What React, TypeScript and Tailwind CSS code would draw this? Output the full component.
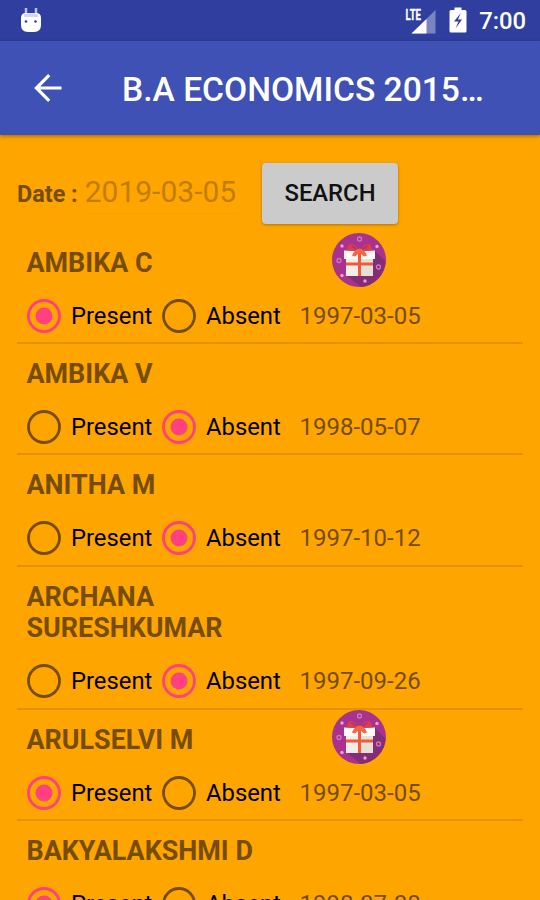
import React from "react";

type Status = "present" | "absent";

interface Student {
  name: string;
  status: Status;
  dob: string;
  birthday?: boolean;
}

const students: Student[] = [
  { name: "AMBIKA C", status: "present", dob: "1997-03-05", birthday: true },
  { name: "AMBIKA V", status: "absent", dob: "1998-05-07" },
  { name: "ANITHA M", status: "absent", dob: "1997-10-12" },
  { name: "ARCHANA SURESHKUMAR", status: "absent", dob: "1997-09-26" },
  { name: "ARULSELVI M", status: "present", dob: "1997-03-05", birthday: true },
  { name: "BAKYALAKSHMI D", status: "present", dob: "1998-07-08" },
];

function StatusBar() {
  return (
    <div className="flex h-[41px] shrink-0 items-center bg-[#303f9f] pl-[20px] pr-[14px] text-white">
      <svg width="22" height="26" viewBox="0 0 22 26" className="-mt-[2px]">
        <path d="M6 1v6M16 1v6" stroke="#b9bfe6" strokeWidth="2.500" />
        <path d="M1 11q0-5 5-5h10q5 0 5 5v7q0 7-7 7H8q-7 0-7-7z" fill="#fff" />
        <path d="M4 7.500q7-2.500 14 0v2.500H4z" fill="#d3d6ef" />
        <circle cx="6" cy="14.500" r="1.300" fill="#303f9f" />
        <circle cx="15.500" cy="14.500" r="1.300" fill="#303f9f" />
      </svg>
      <svg width="31" height="26" viewBox="0 0 31 26" className="ml-auto">
        <path d="M30.500 2v23.500H6.500z" fill="#7a84c3" />
        <path d="M21.500 11v14.500H6.500z" fill="#fff" />
        <path d="M0 0h17v13.500H0z" fill="#303f9f" />
        <text x="0.500" y="12" fill="#fff" stroke="#fff" strokeWidth="0.300" fontFamily="Roboto, sans-serif" fontSize="14.500" fontWeight="700" textLength="15.500" lengthAdjust="spacingAndGlyphs">LTE</text>
      </svg>
      <svg width="18" height="26" viewBox="0 0 18 26" className="ml-[13px] -mt-[2px]">
        <path d="M5.500 0.500h7v2.500h3.500q1.500 0 1.500 1.500v19.500q0 1.500-1.500 1.500H2q-1.500 0-1.500-1.500V4.500Q.5 3 2 3h3.500z" fill="#fff" />
        <path d="M11.800 6L5 14.500h4.500L6.500 21.500l6.500-9H9z" fill="#303f9f" />
      </svg>
      <span className="ml-[12px] mt-[3px] text-[23.800px] font-medium leading-none">7:00</span>
    </div>
  );
}

function AppBar() {
  return (
    <header className="z-10 flex h-[94px] shrink-0 items-center bg-[#3f51b5] pl-[34px] text-white shadow-[0_1px_4px_rgba(0,0,0,0.4)]">
      <svg width="28" height="28" viewBox="0 0 28 28" fill="none" stroke="#fff" strokeWidth="3.200">
        <path d="M27.500 14H3M15.200 1.200L2.400 14l12.800 12.800" />
      </svg>
      <h1 className="ml-[60px] mt-[3px] w-[370px] whitespace-nowrap text-[33.600px] font-medium leading-none">B.A ECONOMICS 2015…</h1>
    </header>
  );
}

function GiftIcon() {
  return (
    <svg width="54" height="54" viewBox="0 0 54 54" className="shrink-0">
      <circle cx="27" cy="27" r="27" fill="#a9328c" />
      <path d="M42 17l11.500 11.500A27 27 0 0 1 29 54L14 42z" fill="#842d77" />
      <g fill="#e3a5d8">
        <circle cx="10" cy="13" r="1.700" />
        <circle cx="45" cy="13.500" r="1.700" />
        <circle cx="10" cy="42.500" r="1.700" />
        <circle cx="33" cy="48" r="1.700" />
      </g>
      <g fill="none" stroke="#cf75bf" strokeWidth="1.300">
        <circle cx="27.500" cy="6" r="2" />
        <circle cx="7" cy="27.500" r="2" />
        <circle cx="46.500" cy="34" r="2" />
      </g>
      <path d="M14 26h27v17H14z" fill="#f2ede6" />
      <path d="M28 26h13v17H28z" fill="#e6dfd4" />
      <path d="M12 17.500h31V26H12z" fill="#fff8f3" />
      <path d="M14 29.500h27v3H14z" fill="#ee5b3c" />
      <path d="M26 18h3v25h-3z" fill="#ee5b3c" />
      <path d="M27.500 18.500Q23 9 17 11.500l-3 6zM27.500 18.500Q32 9 38 11.500l3 6z" fill="#dc3f48" />
      <path d="M19.500 12.500l5 3.500M35.500 12.500l-5 3.500" stroke="#a9328c" strokeWidth="2" />
      <path d="M27.500 15.500q-5 1-7.500 7l3 1 4.500-4 4.500 4 3-1q-2.500-6-7.500-7z" fill="#f26545" />
    </svg>
  );
}

function Radio({ checked, label }: { checked: boolean; label: string }) {
  return (
    <label className="flex w-[135px] items-center">
      <svg width="34" height="34" viewBox="0 0 34 34" className="shrink-0">
        <circle cx="17" cy="17" r="15.500" fill="none" stroke={checked ? "#ff4081" : "#754c00"} strokeWidth="2.800" />
        {checked && <circle cx="17" cy="17" r="8.500" fill="#ff4081" />}
      </svg>
      <span className="ml-[10.500px] mt-[2px] text-[23.800px] leading-none text-black">{label}</span>
    </label>
  );
}

function StudentRow({ student }: { student: Student }) {
  return (
    <li className="border-b-2 border-[#e39300] pb-[0.900px] pl-[9.500px]">
      <div className="flex min-h-[57.500px] items-start">
        <h2 className="w-[305px] pb-[10.900px] pr-[70px] pt-[15px] text-[26.900px] font-bold leading-[31.600px] text-[#754c00]">
          {student.name}
        </h2>
        {student.birthday && <GiftIcon />}
      </div>
      <div className="flex h-[51px] items-center">
        <Radio checked={student.status === "present"} label="Present" />
        <Radio checked={student.status === "absent"} label="Absent" />
        <span className="ml-[3px] text-[24px] leading-none text-[#754c00]">{student.dob}</span>
      </div>
    </li>
  );
}

export default function App() {
  return (
    <div className="flex h-[900px] w-[540px] flex-col overflow-hidden bg-[#ffa500] font-[Roboto,sans-serif]">
      <StatusBar />
      <AppBar />
      <main className="px-[17px]">
        <div className="flex h-[97.500px] items-start pt-[27.500px]">
          <span className="mt-[19px] whitespace-nowrap text-[23.400px] font-bold leading-[24px] text-[#754c00]">Date :</span>
          <span className="ml-[7px] mt-[11px] h-[40px] w-[153px] shrink-0 whitespace-nowrap border-b border-[#f99f00] text-[30px] leading-[36px] text-[#c27d00]">
            2019-03-05
          </span>
          <button className="ml-auto mr-[125px] h-[61px] w-[136px] shrink-0 rounded-[4px] bg-[#cbcbcb] pt-[2px] text-[23.800px] font-medium text-[#111] shadow-[0_1px_3px_rgba(0,0,0,0.3)]">
            SEARCH
          </button>
        </div>
        <ul>
          {students.map((student) => (
            <StudentRow key={student.name} student={student} />
          ))}
        </ul>
      </main>
    </div>
  );
}
